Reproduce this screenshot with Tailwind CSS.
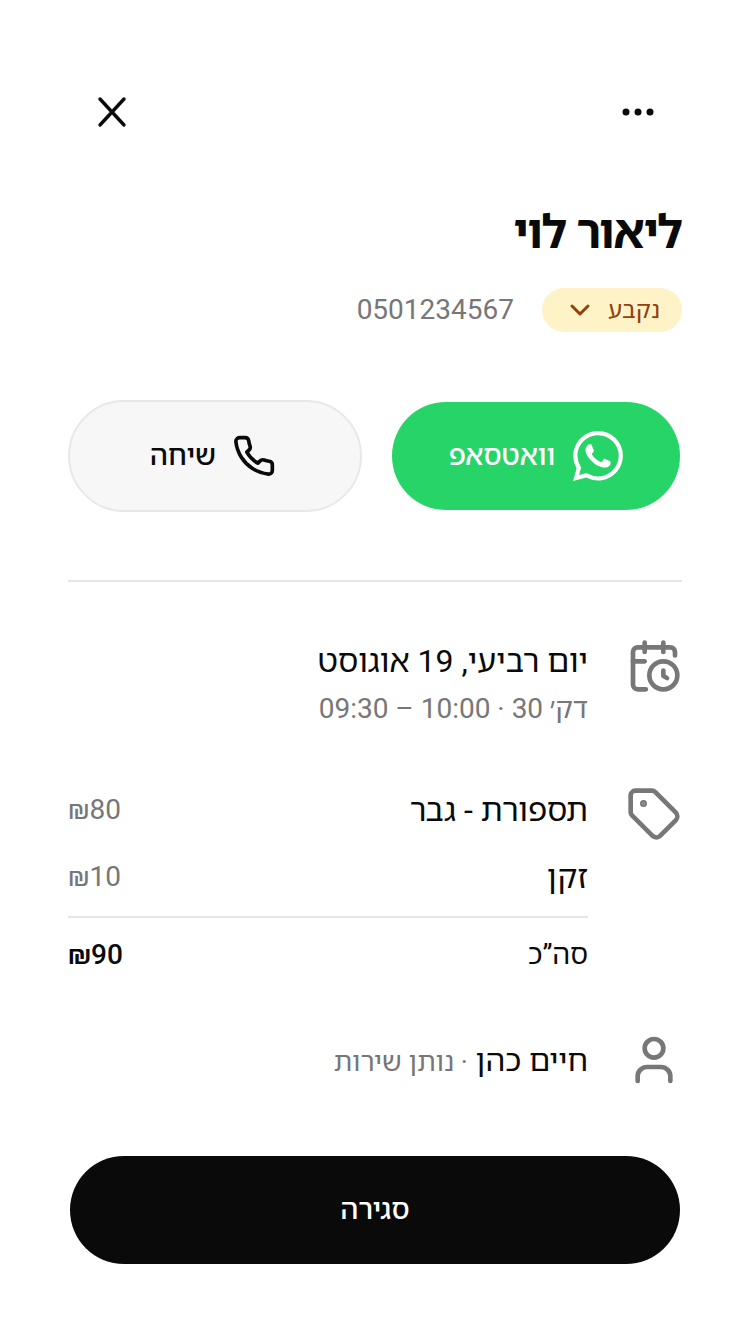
<!DOCTYPE html>
<html lang="he" dir="rtl">
<head>
    <meta charset="UTF-8">
    <title>פרטי תור</title>
    <script src="https://cdn.jsdelivr.net/npm/@tailwindcss/browser@4"></script>
</head>
<body class="bg-white text-[#0a0a0a] font-['Roboto','Noto_Sans','Noto_Sans_Hebrew','DejaVu_Sans',sans-serif]">
    <div class="w-[750px] h-[1334px] px-[68px] pt-[88px] flex flex-col">
        <!-- top bar -->
        <div class="h-12 flex items-center justify-between pr-[24px] pl-[20px]">
            <svg class="w-10 h-10" viewBox="0 0 40 40" fill="#0a0a0a"><circle cx="8" cy="20" r="3.5"/><circle cx="20" cy="20" r="3.5"/><circle cx="32" cy="20" r="3.5"/></svg>
            <svg class="w-12 h-12" viewBox="0 0 48 48" fill="none" stroke="#0a0a0a" stroke-width="3.4" stroke-linecap="round"><path d="M12 11l24 26M36 11L12 37"/></svg>
        </div>

        <h1 class="mt-[68px] text-[46px] leading-[56px] font-bold tracking-tight">ליאור לוי</h1>

        <div class="mt-[28px] flex items-center gap-[28px]">
            <div class="w-[140px] h-[44px] rounded-full bg-[#fef3c7] text-[#92400e] text-[24px] flex items-center justify-between pr-[22px] pl-[26px]">
                <span>נקבע</span>
                <svg class="w-6 h-6" viewBox="0 0 24 24" fill="none" stroke="#92400e" stroke-width="3" stroke-linecap="round" stroke-linejoin="round"><path d="M4 8l8 8 8-8"/></svg>
            </div>
            <span class="text-[28px] leading-[36px] text-[#777777]">0501234567</span>
        </div>

        <!-- actions -->
        <div class="mt-[68px] h-[112px] flex items-center justify-between">
            <button class="mr-[2px] w-[288px] h-[108px] rounded-full bg-[#27d468] text-white text-[28px] font-medium flex items-center justify-center gap-[18px]">
                <svg class="w-[50px] h-[50px]" viewBox="0 0 24 24" fill="#ffffff"><path d="M17.472 14.382c-.297-.149-1.758-.867-2.03-.967-.273-.099-.471-.148-.67.15-.197.297-.767.966-.94 1.164-.173.199-.347.223-.644.075-.297-.15-1.255-.463-2.39-1.475-.883-.788-1.48-1.761-1.653-2.059-.173-.297-.018-.458.13-.606.134-.133.298-.347.446-.52.149-.174.198-.298.298-.497.099-.198.05-.371-.025-.52-.075-.149-.669-1.612-.916-2.207-.242-.579-.487-.5-.669-.51-.173-.008-.371-.01-.57-.01-.198 0-.52.074-.792.372-.272.297-1.04 1.016-1.04 2.479 0 1.462 1.065 2.875 1.213 3.074.149.198 2.096 3.2 5.077 4.487.709.306 1.262.489 1.694.625.712.227 1.36.195 1.871.118.571-.085 1.758-.719 2.006-1.413.248-.694.248-1.289.173-1.413-.074-.124-.272-.198-.57-.347m-5.421 7.403h-.004a9.87 9.87 0 01-5.031-1.378l-.361-.214-3.741.982.998-3.648-.235-.374a9.86 9.86 0 01-1.51-5.26c.001-5.45 4.436-9.884 9.888-9.884 2.64 0 5.122 1.03 6.988 2.898a9.825 9.825 0 012.893 6.994c-.003 5.45-4.437 9.884-9.885 9.884m8.413-18.297A11.815 11.815 0 0012.05 0C5.495 0 .16 5.335.157 11.892c0 2.096.547 4.142 1.588 5.945L.057 24l6.305-1.654a11.882 11.882 0 005.683 1.448h.005c6.554 0 11.89-5.335 11.893-11.893a11.821 11.821 0 00-3.48-8.413z"/></svg>
                <span>וואטסאפ</span>
            </button>
            <button class="w-[294px] h-[112px] rounded-full bg-[#f7f7f7] border-2 border-[#e8e8e8] text-[28px] font-medium flex items-center justify-center gap-[16px] pr-[4px]">
                <svg class="w-[44px] h-[44px]" viewBox="0 0 24 24" fill="none" stroke="#0a0a0a" stroke-width="2" stroke-linecap="round" stroke-linejoin="round"><path d="M22 16.92v3a2 2 0 0 1-2.18 2 19.79 19.79 0 0 1-8.63-3.07 19.5 19.5 0 0 1-6-6 19.79 19.79 0 0 1-3.07-8.67A2 2 0 0 1 4.11 2h3a2 2 0 0 1 2 1.72 12.84 12.84 0 0 0 .7 2.81 2 2 0 0 1-.45 2.11L8.09 9.91a16 16 0 0 0 6 6l1.27-1.27a2 2 0 0 1 2.11-.45 12.84 12.84 0 0 0 2.81.7A2 2 0 0 1 22 16.92z"/></svg>
                <span>שיחה</span>
            </button>
        </div>

        <div class="mt-[68px] h-[2px] bg-[#e5e5e5]"></div>

        <!-- date -->
        <div class="mt-[56px] flex">
            <div class="w-[94px] shrink-0">
                <svg class="w-[56px] h-[56px]" viewBox="0 0 24 24" fill="none" stroke="#777777" stroke-width="2" stroke-linecap="round" stroke-linejoin="round"><path d="M16 14v2.2l1.6 1"/><path d="M16 2v4"/><path d="M21 7.5V6a2 2 0 0 0-2-2H5a2 2 0 0 0-2 2v14a2 2 0 0 0 2 2h3.5"/><path d="M3 10h5"/><path d="M8 2v4"/><circle cx="16" cy="16" r="6"/></svg>
            </div>
            <div class="mt-[3px]">
                <div class="text-[32px] leading-[40px]">יום רביעי, 19 אוגוסט</div>
                <div class="mt-[10px] text-[28px] leading-[36px] text-[#777777]">דק׳ 30 · 10:00 – 09:30</div>
            </div>
        </div>

        <!-- services -->
        <div class="mt-[59px] flex">
            <div class="w-[94px] shrink-0">
                <svg class="w-[56px] h-[56px]" viewBox="0 0 24 24" fill="none" stroke="#777777" stroke-width="2" stroke-linecap="round" stroke-linejoin="round"><path d="M12.586 2.586A2 2 0 0 0 11.172 2H4a2 2 0 0 0-2 2v7.172a2 2 0 0 0 .586 1.414l8.704 8.704a2.426 2.426 0 0 0 3.42 0l6.58-6.58a2.426 2.426 0 0 0 0-3.42z"/><circle cx="7.5" cy="7.5" r=".5" fill="#777777"/></svg>
            </div>
            <div class="flex-1 mt-[4px] text-[32px] leading-[40px]">
                <div class="flex justify-between"><span>תספורת - גבר</span><span class="text-[28px] text-[#777777]">₪80</span></div>
                <div class="mt-[27px] flex justify-between"><span>זקן</span><span class="text-[28px] text-[#777777]">₪10</span></div>
                <div class="mt-[19px] h-[2px] bg-[#e5e5e5]"></div>
                <div class="mt-[17px] flex justify-between"><span class="text-[28px]">סה”כ</span><span class="text-[28px] font-medium">₪90</span></div>
            </div>
        </div>

        <!-- provider -->
        <div class="mt-[57px] flex items-center">
            <div class="w-[94px] shrink-0">
                <svg class="w-[56px] h-[56px]" viewBox="0 0 24 24" fill="none" stroke="#777777" stroke-width="2" stroke-linecap="round" stroke-linejoin="round"><path d="M19 21v-2a4 4 0 0 0-4-4H9a4 4 0 0 0-4 4v2"/><circle cx="12" cy="7" r="4"/></svg>
            </div>
            <div class="mt-[2px] text-[31px] leading-[40px]">חיים כהן <span class="text-[27px] text-[#777777]">· נותן שירות</span></div>
        </div>

        <button class="mt-[68px] mr-[2px] w-[610px] h-[108px] rounded-full bg-[#0a0a0a] text-white text-[28px] font-medium">סגירה</button>
    </div>
</body>
</html>
